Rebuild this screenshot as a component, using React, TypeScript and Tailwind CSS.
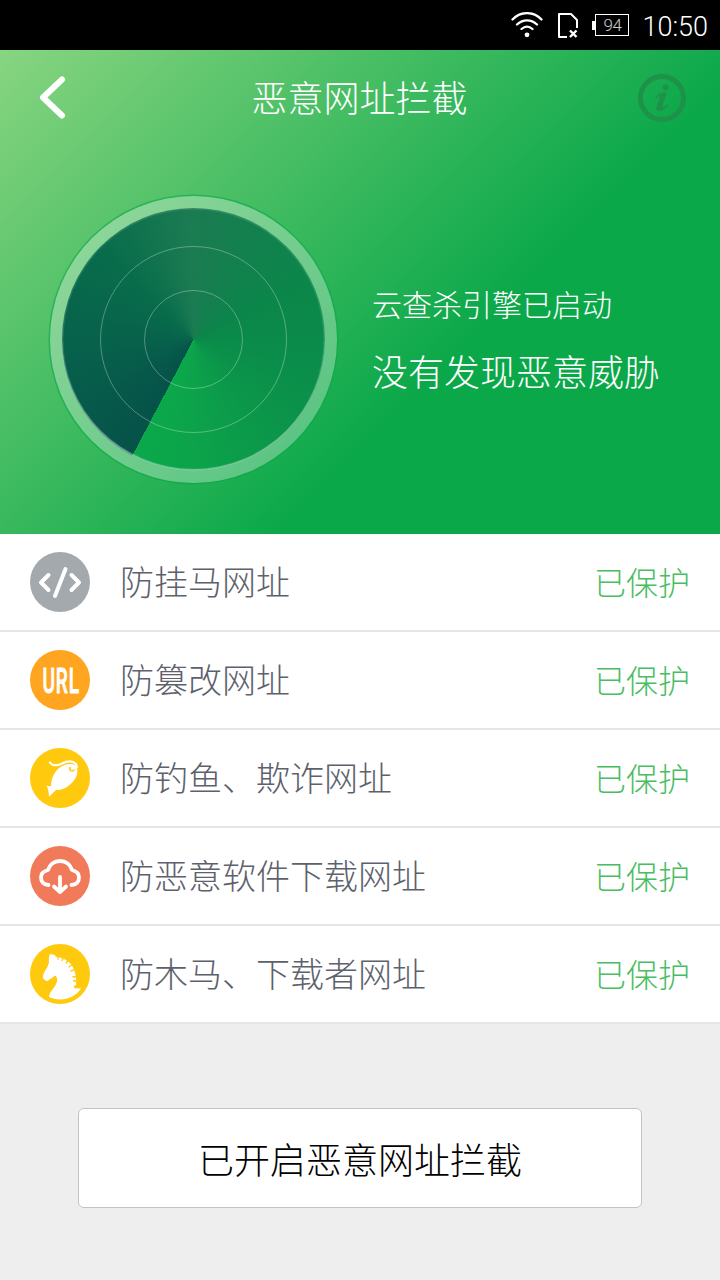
import type { ReactNode } from "react"

interface ProtectionRowProps {
    icon: ReactNode
    color: string
    label: string
}

function StatusBar() {
    return (
        <div className="flex h-[50px] items-center justify-end bg-black pr-3 text-white">
            <svg className="mr-[14px]" width="32" height="26" viewBox="0 0 32 26" fill="none" stroke="currentColor" strokeWidth="2.3" strokeLinecap="round">
                <path d="M1.500 7.500C9.500-1 22.500-1 30.500 7.500M6 12.500c6-5.500 14-5.500 20 0M10.500 17c3.500-3 7.500-3 11 0" />
                <circle cx="16" cy="22.8" r="2.4" fill="currentColor" stroke="none" />
            </svg>
            <svg className="mr-[13px]" width="22" height="27" viewBox="0 0 22 27" fill="none" stroke="currentColor" strokeWidth="2">
                <path d="M10 25H2V2h12l6 6v8" strokeLinejoin="round" />
                <path d="M13 18.500l6.500 6.500M19.500 18.500L13 25" strokeWidth="2.4" />
            </svg>
            <div className="mr-[13px] flex items-center">
                <div className="h-[9px] w-[3px] bg-white" />
                <div className="flex h-[22px] w-[34px] items-center justify-center border-[1.5px] border-white pt-px font-[Roboto] text-[17px] leading-none font-light tracking-tight text-white/80">94</div>
            </div>
            <span className="pt-1 font-[Roboto] text-[27px] leading-none font-light">10:50</span>
        </div>
    )
}

function Radar() {
    return (
        <div className="flex size-[287px] items-center justify-center rounded-full bg-white/30 shadow-[0_0_0_1.5px_rgba(11,168,74,0.6)]">
            <div className="flex size-[263px] items-center justify-center rounded-full bg-[conic-gradient(from_207.8deg,#065249_0deg,#07624b_62deg,#086c4b_107deg,#1b7b52_150deg,#13804e_180deg,#0b864a_215deg,#0a8c4a_250deg,#0b954a_287deg,#0ca34a_332deg,#0ba84b_360deg)] shadow-[inset_0_-2px_1px_rgba(255,255,255,0.38),inset_0_0_1px_1.5px_rgba(255,255,255,0.12)]">
                <div className="flex size-[187px] items-center justify-center rounded-full border-[1.5px] border-white/30">
                    <div className="size-[99px] rounded-full border-[1.5px] border-white/30" />
                </div>
            </div>
        </div>
    )
}

function CodeIcon() {
    return (
        <svg viewBox="0 0 60 60" fill="none" stroke="white" strokeWidth="4" strokeLinecap="round" strokeLinejoin="round">
            <path d="M18.500 23l-7.500 7.500 7.500 7.500M41.500 23l7.500 7.500-7.500 7.500M35.500 17L25 44" />
        </svg>
    )
}

function UrlIcon() {
    return (
        <svg viewBox="0 0 60 60" fill="white" stroke="white" strokeWidth="0.9">
            <text x="23" y="43" transform="scale(0.54 1)" letterSpacing="1.5" fontFamily="Roboto, sans-serif" fontSize="35.5" fontWeight="500">URL</text>
        </svg>
    )
}

function FishIcon() {
    return (
        <svg viewBox="0 0 60 60">
            <path d="M46 17.500C49 23 47 30 41.700 35 37 40 31 42.500 26 42L19 48.700C18.800 44.500 18.200 41 16.500 37.300 18.500 38.300 20 38.500 21.300 37.700 20.500 32 24 24.500 28.300 20.700 33 16.500 40 14.500 46 17.500Z" fill="white" />
            <path d="M20 14.500c2 3.500 7 3.500 12 1 5-2.500 10-3.500 14 .5l1 3" fill="none" stroke="white" strokeWidth="2.200" strokeLinecap="round" />
            <path d="M40 19.500c-1 3 2 4.500 4 2.500" fill="none" stroke="#ffc90e" strokeWidth="1.600" strokeLinecap="round" />
        </svg>
    )
}

function CloudIcon() {
    return (
        <svg viewBox="0 0 60 60" fill="none" stroke="white" strokeWidth="3.8" strokeLinecap="round" strokeLinejoin="round">
            <path d="M18.500 39C13.500 38.500 11 35.500 11 31.500c0-4 3-6.500 7-7.500 1.500-5.500 6-9 12-9s10.500 3.500 12 9c4 1 7 3.500 7 7.500s-2.500 7-7.500 7.500" />
            <path d="M30 31v14M24 40.500l6 5.500 6-5.500" />
        </svg>
    )
}

function HorseIcon() {
    return (
        <svg viewBox="0 0 60 60">
            <path d="M20 10L25 11 25.500 12.700C35 13.500 42 18.500 44.500 27 46 32 46.500 36 46 41L43.800 42C44 43.500 44.300 44 45 44.300L51 44.500C47 51 39 55.500 30 55.500 26 55.500 22 54.500 19 53 19.500 48 23 45.500 25.300 41.500 27.500 37.500 28 34 25.500 31.700 23.500 31.500 23 34.500 19.800 35 18.500 37 17 37.500 15.200 36.300 12.500 35 12.500 32.500 13.500 30 15 26.500 17.500 24 19 18.500 18.500 15 19 12 20 10Z" fill="white" />
            <path d="M28 12v3.500M33.500 13.500l-1.500 3.500M38.300 16l-2.300 3.500M42 20.800l-3.500 2.500M44.500 25.800l-4 1.200M47 32.800h-4.500M47.500 37.500l-4.500-1" fill="none" stroke="#ffc90e" strokeWidth="1.400" />
        </svg>
    )
}

function ProtectionRow({ icon, color, label }: ProtectionRowProps) {
    return (
        <li className="flex h-[98px] items-center border-b-2 border-[#e5e5e5] bg-white px-[30px]">
            <div className={`size-[60px] shrink-0 overflow-hidden rounded-full ${color}`}>{icon}</div>
            <span className="ml-[30px] pb-0.5 text-[34px] leading-[48px] text-[#5c616c]">{label}</span>
            <span className="ml-auto pb-[3px] text-[32px] leading-[48px] text-[#49bd61]">已保护</span>
        </li>
    )
}

const rows: ProtectionRowProps[] = [
    { icon: <CodeIcon />, color: "bg-[#a3a9ad]", label: "防挂马网址" },
    { icon: <UrlIcon />, color: "bg-[#ffa51f]", label: "防篡改网址" },
    { icon: <FishIcon />, color: "bg-[#ffc90e]", label: "防钓鱼、欺诈网址" },
    { icon: <CloudIcon />, color: "bg-[#f07a5a]", label: "防恶意软件下载网址" },
    { icon: <HorseIcon />, color: "bg-[#ffc90e]", label: "防木马、下载者网址" },
]

export default function App() {
    return (
        <div className="flex h-[1280px] w-[720px] flex-col bg-[#eeeeee] font-['Noto_Sans_CJK_SC',sans-serif] font-light">
            <StatusBar />

            <section className="h-[484px] bg-[linear-gradient(135deg,#88d580_0%,#0ba84a_63%)] text-white">
                <header className="flex h-24 items-center justify-between pr-[34px] pl-[38px]">
                    <svg width="48" height="44" viewBox="0 0 48 44" fill="none" stroke="currentColor" strokeWidth="6" strokeLinecap="round" strokeLinejoin="round">
                        <path d="M24 3.500L5 21.500l19 18" />
                    </svg>
                    <h1 className="pr-[5px] pb-[4px] text-[36px] leading-[50px]">恶意网址拦截</h1>
                    <svg width="48" height="48" viewBox="0 0 48 48" className="text-[#1e9249]">
                        <circle cx="24" cy="24" r="21.500" fill="none" stroke="currentColor" strokeWidth="5" />
                        <circle cx="27.700" cy="13.300" r="3.100" fill="currentColor" />
                        <path d="M17.300 24c2-3.500 5.500-5.500 11.400-5.700l-4 13.200c-.5 2 .8 2 1.800 1l3-2.500 1 .8c-2.500 3.800-5.500 6.200-9 6.200-2.800 0-3.500-2-2.800-4.500l3-9.500c.4-1.500-1-1.500-3.600 1.700z" fill="currentColor" />
                    </svg>
                </header>

                <div className="mt-[50px] flex items-center pl-[50px]">
                    <Radar />
                    <div className="ml-[35px] flex flex-col gap-4 pb-[3px]">
                        <p className="text-[30px] leading-[48px]">云查杀引擎已启动</p>
                        <p className="text-[36px] leading-[54px]">没有发现恶意威胁</p>
                    </div>
                </div>
            </section>

            <ul>
                {rows.map(row => <ProtectionRow key={row.label} {...row} />)}
            </ul>

            <button className="mx-auto mt-[84px] h-[100px] w-[564px] rounded-md border-[1.5px] border-[#bfc5c7] bg-white text-[36px] text-black">
                已开启恶意网址拦截
            </button>
        </div>
    )
}
